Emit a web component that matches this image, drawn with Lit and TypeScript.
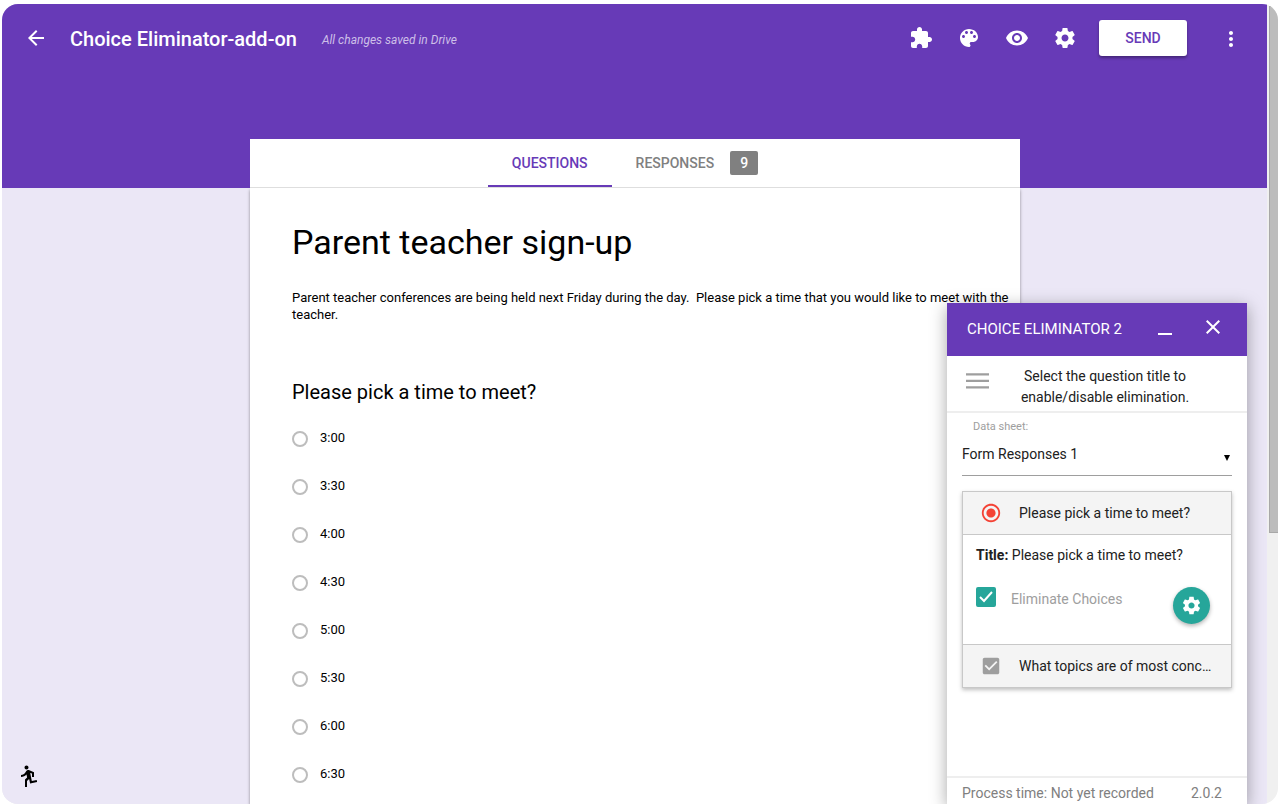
import { LitElement, html, css, svg } from "lit";
import { customElement, property, state } from "lit/decorators.js";

const GEAR =
  "M19.43 12.98c.04-.32.07-.64.07-.98s-.03-.66-.07-.98l2.11-1.65c.19-.15.24-.42.12-.64l-2-3.46c-.12-.22-.39-.3-.61-.22l-2.49 1c-.52-.4-1.08-.73-1.69-.98l-.38-2.65C14.46 2.18 14.25 2 14 2h-4c-.25 0-.46.18-.49.42l-.38 2.65c-.61.25-1.17.59-1.69.98l-2.49-1c-.23-.09-.49 0-.61.22l-2 3.46c-.13.22-.07.49.12.64l2.11 1.65c-.04.32-.07.65-.07.98s.03.66.07.98l-2.11 1.65c-.19.15-.24.42-.12.64l2 3.46c.12.22.39.3.61.22l2.49-1c.52.4 1.08.73 1.69.98l.38 2.65c.03.24.24.42.49.42h4c.25 0 .46-.18.49-.42l.38-2.65c.61-.25 1.17-.59 1.69-.98l2.49 1c.23.09.49 0 .61-.22l2-3.46c.12-.22.07-.49-.12-.64l-2.11-1.65zM12 15.5c-1.93 0-3.5-1.57-3.5-3.5s1.57-3.5 3.5-3.5 3.5 1.57 3.5 3.5-1.57 3.5-3.5 3.5z";

const ICONS: Record<string, unknown> = {
  back: svg`<path d="M20 11H7.83l5.59-5.59L12 4l-8 8 8 8 1.41-1.41L7.83 13H20v-2z"/>`,
  addon: svg`<path d="M20.5 11H19V7c0-1.1-.9-2-2-2h-4V3.5C13 2.12 11.88 1 10.5 1S8 2.12 8 3.5V5H4c-1.1 0-1.99.9-1.99 2v3.8H3.5c1.49 0 2.7 1.21 2.7 2.7s-1.21 2.7-2.7 2.7H2V20c0 1.1.9 2 2 2h3.8v-1.5c0-1.49 1.21-2.7 2.7-2.7 1.49 0 2.7 1.21 2.7 2.7V22H17c1.1 0 2-.9 2-2v-4h1.5c1.38 0 2.5-1.12 2.5-2.5S21.88 11 20.5 11z"/>`,
  palette: svg`<path d="M12 3c-4.97 0-9 4.03-9 9s4.03 9 9 9c.83 0 1.5-.67 1.5-1.5 0-.39-.15-.74-.39-1.01-.23-.26-.38-.61-.38-.99 0-.83.67-1.5 1.5-1.5H16c2.76 0 5-2.24 5-5 0-4.42-4.03-8-9-8zm-5.5 9c-.83 0-1.5-.67-1.5-1.5S5.67 9 6.5 9 8 9.67 8 10.5 7.33 12 6.5 12zm3-4C8.67 8 8 7.33 8 6.5S8.67 5 9.5 5s1.5.67 1.5 1.5S10.33 8 9.5 8zm5 0c-.83 0-1.5-.67-1.5-1.5S13.67 5 14.5 5s1.5.67 1.5 1.5S15.33 8 14.5 8zm3 4c-.83 0-1.5-.67-1.5-1.5S16.67 9 17.5 9s1.5.67 1.5 1.5-.67 1.5-1.5 1.5z"/>`,
  preview: svg`<path d="M12 4.5C7 4.5 2.73 7.61 1 12c1.73 4.39 6 7.5 11 7.5s9.27-3.11 11-7.5c-1.73-4.39-6-7.5-11-7.5zM12 17c-2.76 0-5-2.24-5-5s2.24-5 5-5 5 2.24 5 5-2.24 5-5 5zm0-8c-1.66 0-3 1.34-3 3s1.34 3 3 3 3-1.34 3-3-1.34-3-3-3z"/>`,
  gear: svg`<path d=${GEAR} />`,
  more: svg`<path d="M12 9c1.1 0 2-.9 2-2s-.9-2-2-2-2 .9-2 2 .9 2 2 2zm0 2c-1.1 0-2 .9-2 2s.9 2 2 2 2-.9 2-2-.9-2-2-2zm0 6c-1.1 0-2 .9-2 2s.9 2 2 2 2-.9 2-2-.9-2-2-2z"/>`,
  close: svg`<path d="M19 6.41L17.59 5 12 10.59 6.41 5 5 6.41 10.59 12 5 17.59 6.41 19 12 13.41 17.59 19 19 17.59 13.41 12z"/>`,
  minimize: svg`<path d="M5 18h14v2H5z"/>`,
  menu: svg`<path d="M1 4.2h23v2.3H1zM1 10.7h23v2.3H1zM1 17.2h23v2.3H1z"/>`,
  radio: svg`<path d="M12 7c-2.76 0-5 2.24-5 5s2.24 5 5 5 5-2.24 5-5-2.24-5-5-5zm0-5C6.48 2 2 6.48 2 12s4.48 10 10 10 10-4.48 10-10S17.52 2 12 2zm0 18c-4.42 0-8-3.58-8-8s3.58-8 8-8 8 3.58 8 8-3.58 8-8 8z"/>`,
  checkbox: svg`<path d="M19 3H5c-1.11 0-2 .9-2 2v14c0 1.1.89 2 2 2h14c1.11 0 2-.9 2-2V5c0-1.1-.89-2-2-2zm-9 14l-5-5 1.41-1.41L10 14.17l7.59-7.59L19 8l-9 9z"/>`,
  run: svg`<path transform="matrix(-1 0 0 1 24 0)" d="M13.49 5.48c1.1 0 2-.9 2-2s-.9-2-2-2-2 .9-2 2 .9 2 2 2zm-3.6 13.9l1-4.4 2.1 2v6h2v-7.5l-2.1-2 .6-3c1.3 1.5 3.3 2.5 5.5 2.5v-2c-1.900 0-3.500-1-4.300-2.400l-1-1.600c-.4-.6-1-1-1.700-1-.3 0-.5.1-.8.1l-5.200 2.200v4.700h2v-3.400l1.800-.7-1.600 8.100-4.900-1-.4 2 7 1.400z"/>`,
};

@customElement("app-icon")
export class AppIcon extends LitElement {
  @property() name = "";
  static styles = css`
    :host { display: block; width: 24px; height: 24px; flex: none; }
    svg { display: block; width: 100%; height: 100%; fill: currentColor; }
  `;
  render() {
    return html`<svg viewBox="0 0 24 24" aria-hidden="true">${ICONS[this.name]}</svg>`;
  }
}

@customElement("form-header")
export class FormHeader extends LitElement {
  static styles = css`
    :host {
      display: flex;
      flex-direction: column;
      justify-content: space-between;
      min-height: 184px;
      padding-left: 1px;
      background: #673ab7;
      color: #fff;
    }
    .bar { display: flex; align-items: center; padding: 16px 24px 0 21px; }
    button { font: inherit; border: 0; background: none; padding: 0; color: inherit; cursor: pointer; }
    .title { margin: 0 0 0 22px; padding-top: 2px; font-size: 20px; font-weight: 500; line-height: 24px; white-space: nowrap; }
    .status { margin-left: 25px; padding-top: 4px; font-size: 12px; font-style: italic; line-height: 16px; color: #cdbfe8; white-space: nowrap; }
    .actions { display: flex; align-items: center; gap: 24px; margin-left: auto; }
    .send {
      width: 88px;
      height: 36px;
      margin: 0 8px 0 -2px;
      border-radius: 3px;
      background: #fff;
      color: #673ab7;
      font-size: 14px;
      font-weight: 500;
      box-shadow: 0 2px 3px rgba(0, 0, 0, 0.35);
    }
    .tabs {
      display: flex;
      justify-content: center;
      box-sizing: border-box;
      width: 770px;
      max-width: 100%;
      height: 49px;
      margin: 0 auto;
      background: #fff;
      border-bottom: 1px solid #dedede;
    }
    .tab {
      display: flex;
      align-items: center;
      gap: 16px;
      padding: 0 24px;
      border-top: 2px solid transparent;
      border-bottom: 2px solid transparent;
      color: #808080;
      font-size: 14px;
      font-weight: 500;
    }
    .tab.active { color: #673ab7; border-bottom-color: #673ab7; }
    .count { width: 28px; border-radius: 2px; background: #808080; color: #fff; line-height: 24px; text-align: center; }
  `;
  render() {
    return html`
      <div class="bar">
        <button aria-label="Back"><app-icon name="back"></app-icon></button>
        <h1 class="title">Choice Eliminator-add-on</h1>
        <span class="status">All changes saved in Drive</span>
        <div class="actions">
          <button aria-label="Add-ons"><app-icon name="addon"></app-icon></button>
          <button aria-label="Color palette"><app-icon name="palette"></app-icon></button>
          <button aria-label="Preview"><app-icon name="preview"></app-icon></button>
          <button aria-label="Settings"><app-icon name="gear"></app-icon></button>
          <button class="send">SEND</button>
          <button aria-label="More"><app-icon name="more"></app-icon></button>
        </div>
      </div>
      <nav class="tabs">
        <button class="tab active">QUESTIONS</button>
        <button class="tab">RESPONSES <span class="count">9</span></button>
      </nav>
    `;
  }
}

@customElement("form-card")
export class FormCard extends LitElement {
  private times = ["3:00", "3:30", "4:00", "4:30", "5:00", "5:30", "6:00", "6:30"];
  static styles = css`
    :host {
      display: block;
      box-sizing: border-box;
      width: 770px;
      max-width: 100%;
      min-height: 100%;
      margin: 0 auto;
      padding: 34px 8px 0 42px;
      background: #fff;
      color: #000;
      box-shadow: 0 2px 3px rgba(0, 0, 0, 0.4);
    }
    h2 { margin: 0; font-size: 34px; font-weight: 400; line-height: 40px; }
    p { margin: 27px 0 0; font-size: 13px; line-height: 17px; white-space: pre-wrap; }
    fieldset { margin: 57px 0 0; padding: 0; border: 0; }
    legend { padding: 0; font-size: 20px; line-height: 24px; }
    .options { display: flex; flex-direction: column; padding-top: 11px; }
    label { display: flex; align-items: center; gap: 12px; height: 48px; font-size: 13px; line-height: 16px; }
    label span { padding-bottom: 2px; }
    input {
      appearance: none;
      box-sizing: border-box;
      width: 16px;
      height: 16px;
      margin: 0;
      border: 2px solid #bdbdbd;
      border-radius: 50%;
      background: #fff;
    }
    input:checked { border-color: #673ab7; }
  `;
  render() {
    return html`
      <h2>Parent teacher sign-up</h2>
      <p>Parent teacher conferences are being held next Friday during the day.  Please pick a time that you would like to meet with the teacher.</p>
      <fieldset>
        <legend>Please pick a time to meet?</legend>
        <div class="options">
          ${this.times.map((t) => html`<label><input type="radio" name="time" value=${t} /><span>${t}</span></label>`)}
        </div>
      </fieldset>
    `;
  }
}

@customElement("eliminator-dialog")
export class EliminatorDialog extends LitElement {
  @state() private eliminate = true;
  static styles = css`
    :host {
      display: flex;
      flex-direction: column;
      background: #fff;
      color: #212121;
      font-size: 14px;
      line-height: 21px;
      box-shadow: 0 4px 16px rgba(0, 0, 0, 0.35);
    }
    button { font: inherit; border: 0; background: none; padding: 0; color: inherit; cursor: pointer; }
    .head { display: flex; align-items: center; height: 53px; padding: 0 22px 0 20px; background: #673ab7; color: #fff; }
    .head h3 { flex: 1; margin: 0; font-size: 15px; font-weight: 400; }
    .controls { display: flex; gap: 24px; padding-bottom: 5px; }
    .intro { display: flex; align-items: flex-start; padding: 10px 34px 3px 18px; border-bottom: 2px solid #eee; }
    .intro button { padding-top: 3px; color: #9e9e9e; }
    .intro p { flex: 1; margin: 0; padding-left: 8px; text-align: center; }
    .body { flex: 1; padding: 4px 15px 0; }
    .sheet { display: block; padding-left: 11px; font-size: 11px; line-height: 20px; color: #9e9e9e; }
    .picker { display: grid; align-items: center; border-bottom: 1px solid #9e9e9e; }
    .picker > * { grid-area: 1 / 1; }
    .picker svg { justify-self: end; width: 6px; height: 6px; margin: 4px 2px 0 0; pointer-events: none; }
    select {
      appearance: none;
      width: 100%;
      height: 38px;
      margin: 0;
      padding: 0 16px 4px 0;
      border: 0;
      background: transparent;
      color: inherit;
      font: inherit;
      line-height: 21px;
    }
    .list { margin-top: 15px; border: 1px solid #c8c8c8; box-shadow: 0 2px 4px rgba(0, 0, 0, 0.25); }
    .item { display: flex; align-items: center; gap: 18px; box-sizing: border-box; width: 100%; height: 43px; padding: 0 18px; background: #f4f4f4; text-align: left; white-space: nowrap; }
    .item app-icon { width: 20px; height: 20px; color: #9e9e9e; }
    .item.open app-icon { width: 22px; height: 22px; margin: 0 -1px; color: #f44336; }
    .item.open { border-bottom: 1px solid #c8c8c8; }
    .item.last { border-top: 1px solid #c8c8c8; }
    .item.last app-icon { width: 22px; height: 22px; margin: 0 -1px; }
    .detail { padding: 10px 21px 20px 13px; }
    .detail b { font-weight: 700; }
    .row { display: flex; justify-content: space-between; align-items: flex-start; padding-top: 21px; }
    .check { display: flex; gap: 15px; color: #9e9e9e; cursor: pointer; }
    .check .box { display: grid; width: 20px; height: 20px; }
    .check .box > * { grid-area: 1 / 1; }
    .check input { appearance: none; box-sizing: border-box; width: 20px; height: 20px; margin: 0; border: 2px solid #5a5a5a; border-radius: 2px; }
    .check input:checked { border-color: #26a69a; background: #26a69a; }
    .check svg { z-index: 1; width: 20px; height: 20px; pointer-events: none; fill: none; stroke: #fff; stroke-width: 2; }
    .check .text { padding-top: 2px; }
    .gear { display: grid; place-items: center; width: 37px; height: 37px; border-radius: 50%; background: #26a69a; color: #fff; box-shadow: 0 2px 4px rgba(0, 0, 0, 0.3); }
    .gear app-icon { width: 21px; height: 21px; }
    .foot { display: flex; justify-content: space-between; padding: 5px 25px 0 15px; border-top: 2px solid #eee; color: #808080; }
  `;
  render() {
    return html`
      <div class="head">
        <h3>CHOICE ELIMINATOR 2</h3>
        <div class="controls">
          <button aria-label="Minimize"><app-icon name="minimize"></app-icon></button>
          <button aria-label="Close"><app-icon name="close"></app-icon></button>
        </div>
      </div>
      <div class="intro">
        <button aria-label="Menu"><app-icon name="menu"></app-icon></button>
        <p>Select the question title to enable/disable elimination.</p>
      </div>
      <div class="body">
        <label class="sheet" for="sheet">Data sheet:</label>
        <div class="picker">
          <select id="sheet"><option>Form Responses 1</option></select>
          <svg viewBox="0 0 6 6" aria-hidden="true"><path d="M0 0h6L3 6z" /></svg>
        </div>
        <div class="list">
          <button class="item open"><app-icon name="radio"></app-icon><span>Please pick a time to meet?</span></button>
          <div class="detail">
            <div><b>Title:</b> Please pick a time to meet?</div>
            <div class="row">
              <label class="check">
                <span class="box">
                  <input type="checkbox" .checked=${this.eliminate}
                    @change=${(e: Event) => (this.eliminate = (e.target as HTMLInputElement).checked)} />
                  <svg viewBox="0 0 20 20" aria-hidden="true"><path d="M4 10l4 4 8-9" /></svg>
                </span>
                <span class="text">Eliminate Choices</span>
              </label>
              <button class="gear" aria-label="Choice settings"><app-icon name="gear"></app-icon></button>
            </div>
          </div>
          <button class="item last"><app-icon name="checkbox"></app-icon><span>What topics are of most conc…</span></button>
        </div>
      </div>
      <div class="foot"><span>Process time: Not yet recorded</span><span>2.0.2</span></div>
    `;
  }
}

@customElement("app-root")
export class AppRoot extends LitElement {
  static styles = css`
    :host {
      display: block;
      box-sizing: border-box;
      height: 100vh;
      padding: 4px 0 0 2px;
      background: #fff;
      font-family: Roboto, "Liberation Sans", sans-serif;
    }
    .frame { display: flex; height: 100%; overflow: hidden; border-radius: 16px; background: #f0f0f0; }
    .page { position: relative; flex: 1; min-width: 0; display: flex; flex-direction: column; overflow: hidden; background: #ebe7f6; }
    .content { flex: 1; min-height: 0; padding-left: 1px; overflow: hidden; }
    .track { width: 11px; box-sizing: border-box; padding: 2px 0 0 2px; }
    .thumb { height: 66%; box-sizing: border-box; border: 1px solid #a8a8a8; border-right: 0; background: #bcbcbc; }
    eliminator-dialog { position: absolute; right: 20px; bottom: 0; width: 300px; height: 501px; }
    .help { position: absolute; left: 14px; bottom: 16px; padding: 0; border: 0; background: none; color: #000; }
  `;
  render() {
    return html`
      <div class="frame">
        <div class="page">
          <form-header></form-header>
          <main class="content"><form-card></form-card></main>
          <button class="help" aria-label="Walk through"><app-icon name="run"></app-icon></button>
          <eliminator-dialog></eliminator-dialog>
        </div>
        <div class="track"><div class="thumb"></div></div>
      </div>
    `;
  }
}
